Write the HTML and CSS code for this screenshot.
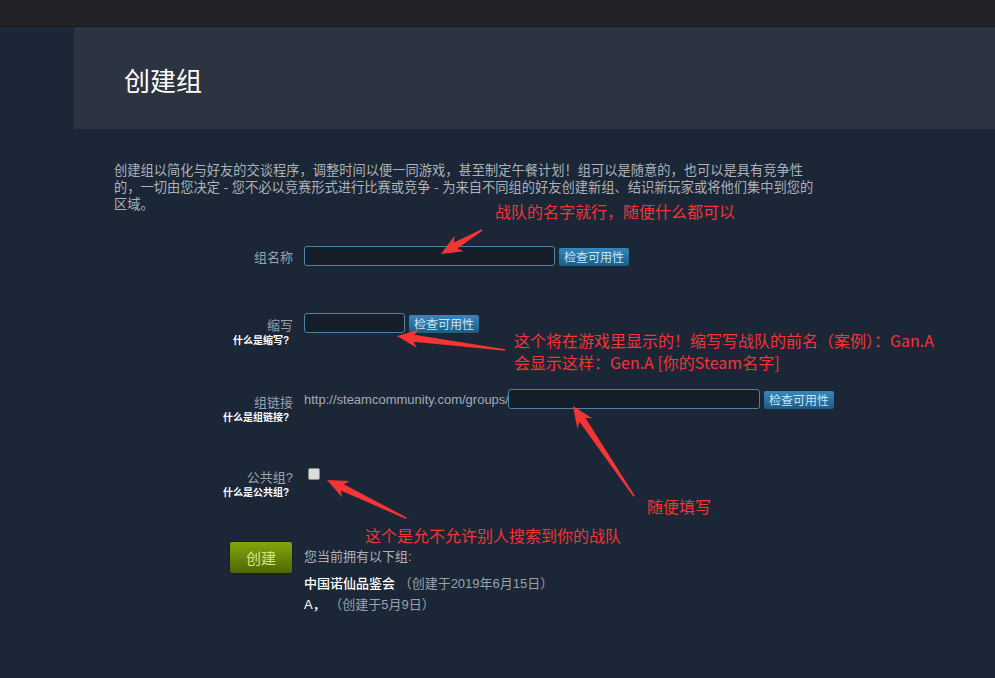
FILE: index.html
```html
<!DOCTYPE html>
<html lang="zh-CN">
<head>
<meta charset="utf-8">
<title>创建组</title>
<link rel="stylesheet" href="styles.css">
</head>
<body>
<div class="topbar"></div>
<div class="page">
  <div class="band"><h1 class="title">创建组</h1></div>
  <div class="content">
    <p class="intro">创建组以简化与好友的交谈程序，调整时间以便一同游戏，甚至制定午餐计划！组可以是随意的，也可以是具有竞争性<br>的，一切由您决定 - 您不必以竞赛形式进行比赛或竞争 - 为来自不同组的好友创建新组、结识新玩家或将他们集中到您的区域。</p>
    <div class="form">
      <div class="row row-name">
        <div class="label"><div class="lbl">组名称</div></div>
        <div class="field"><input class="txt w-name" type="text"><button class="check">检查可用性</button></div>
      </div>
      <div class="row row-abbr">
        <div class="label"><div class="lbl">缩写</div><div class="help">什么是缩写?</div></div>
        <div class="field"><input class="txt w-abbr" type="text"><button class="check">检查可用性</button></div>
      </div>
      <div class="row row-link">
        <div class="label"><div class="lbl">组链接</div><div class="help">什么是组链接?</div></div>
        <div class="field"><span class="url">http://steamcommunity.com/groups/</span><input class="txt w-link" type="text"><button class="check">检查可用性</button></div>
      </div>
      <div class="row row-public">
        <div class="label lbl-public"><div class="lbl">公共组?</div><div class="help">什么是公共组?</div></div>
        <div class="field field-top"><input class="chk" type="checkbox"></div>
      </div>
      <div class="row row-create">
        <div class="label"><button class="create">创建</button></div>
        <div class="groups">
          <div class="groups-head">您当前拥有以下组:</div>
          <div class="group-list">
            <div class="group"><span class="gname">中国诺仙品鉴会</span> <span class="date">（创建于2019年6月15日）</span></div>
            <div class="group"><span class="gname">A，</span> <span class="date">（创建于5月9日）</span></div>
          </div>
        </div>
      </div>
    </div>
  </div>
</div>

<div class="notes">
  <svg class="arrows" width="995" height="678" viewBox="0 0 995 678">
    <g fill="#f43535">
      <polygon transform="translate(441 254) rotate(-30.3)" points="0,0 21,-9 17,-3.5 47.5,-0.8 47.5,0.8 17,3.5 21,9"/>
      <polygon transform="translate(397 336) rotate(7.4)" points="0,0 21,-9 17,-3.5 109,-0.8 109,0.8 17,3.5 21,9"/>
      <polygon transform="translate(573 406) rotate(55.9)" points="0,0 21,-9 17,-3.5 109,-0.8 109,0.8 17,3.5 21,9"/>
      <polygon transform="translate(327 480) rotate(25.7)" points="0,0 21,-9 17,-3.5 88,-0.8 88,0.8 17,3.5 21,9"/>
    </g>
  </svg>
  <div class="note note-1">战队的名字就行，随便什么都可以</div>
  <div class="note note-2">这个将在游戏里显示的！缩写写战队的前名（案例）：Gan.A<br>会显示这样：Gen.A [你的Steam名字]</div>
  <div class="note note-3">随便填写</div>
  <div class="note note-4">这个是允不允许别人搜索到你的战队</div>
</div>
</body>
</html>
```

FILE: styles.css
```css
html, body {
  margin: 0;
  padding: 0;
}
body {
  position: relative;
  width: 995px;
  height: 678px;
  overflow: hidden;
  background: #1b2637;
  font-family: "Liberation Sans", "Noto Sans CJK SC", sans-serif;
  font-size: 13px;
  color: #acb2b8;
}
.topbar {
  height: 26px;
  background: #212329;
  border-bottom: 1px solid #16181c;
}
.page {
  margin-left: 74px;
}
.band {
  height: 102px;
  background: #2b3440;
  box-sizing: border-box;
  padding: 36px 0 0 50px;
}
.title {
  margin: 0;
  font-family: "Noto Sans CJK SC", sans-serif;
  font-weight: 400;
  font-size: 26px;
  line-height: 34px;
  color: #ffffff;
}
.content {
  padding-left: 40px;
}
.intro {
  margin: 33px 0 0;
  width: 712px;
  font-size: 13.25px;
  line-height: 17px;
  color: #acb2b8;
}
.form {
  margin-top: 33px;
}
.row {
  display: grid;
  grid-template-columns: 179px auto;
  column-gap: 11px;
}
.row-name { margin-bottom: 47px; }
.row-abbr { margin-bottom: 41px; }
.row-link { margin-bottom: 43px; }
.row-public { margin-bottom: 42px; }
.label {
  text-align: right;
  padding-top: 5px;
}
.row-name .label { padding-top: 4px; }
.row-link .label { padding-top: 6px; }
.lbl-public { padding-top: 2px; }
.lbl {
  font-size: 13px;
  line-height: 16px;
  color: #9aa2ab;
}
.help {
  font-size: 10px;
  line-height: 14px;
  font-weight: bold;
  color: #ffffff;
  padding-right: 4px;
}
.field {
  display: flex;
  align-items: center;
  height: 20px;
}
.field-top {
  align-items: flex-start;
}
.txt {
  box-sizing: border-box;
  height: 20px;
  margin: 0;
  padding: 0 4px;
  background: #161e2a;
  border: 1px solid #4a85a8;
  border-radius: 3px;
  color: #fff;
  outline: none;
}
.w-name { width: 251px; }
.w-abbr { width: 101px; }
.w-link { width: 252px; }
.url {
  font-size: 13px;
  color: #a3abb3;
  white-space: nowrap;
  width: 204px;
}
.check {
  margin: 1px 0 0 4px;
  box-sizing: border-box;
  width: 70px;
  height: 18px;
  padding: 0;
  border: none;
  border-radius: 2px;
  background: linear-gradient(to bottom, #3588bb 0%, #1d5b84 100%);
  color: #c7e6fa;
  font-family: "Noto Sans CJK SC", sans-serif;
  font-size: 12px;
  line-height: 18px;
}
.chk {
  appearance: none;
  -webkit-appearance: none;
  box-sizing: border-box;
  width: 12px;
  height: 12px;
  margin: 0 0 0 4px;
  background: #dcdcdc;
  border: 1px solid #8a8a8a;
  border-radius: 2px;
}
.row-create .label {
  padding-top: 0;
}
.create {
  box-sizing: border-box;
  width: 62px;
  height: 31px;
  margin-right: 1px;
  padding: 0;
  border: none;
  border-radius: 2px;
  background: linear-gradient(to bottom, #80a30c 5%, #536904 95%);
  box-shadow: 0 0 2px rgba(0,0,0,0.5);
  color: #d2e885;
  font-family: "Noto Sans CJK SC", sans-serif;
  font-size: 15px;
  line-height: 31px;
}
.groups {
  padding-top: 7px;
}
.groups-head {
  line-height: 16px;
  color: #acb2b8;
}
.group-list {
  margin-top: 8px;
}
.group {
  line-height: 21px;
  color: #ffffff;
}
.gname {
  font-weight: 500;
}
.date {
  color: #9aa2ab;
}
.notes {
  position: absolute;
  left: 0;
  top: 0;
  width: 995px;
  height: 678px;
  pointer-events: none;
}
.arrows {
  position: absolute;
  left: 0;
  top: 0;
}
.note {
  position: absolute;
  font-family: "Noto Sans CJK SC", sans-serif;
  font-size: 16px;
  line-height: 22px;
  color: #f43535;
  white-space: nowrap;
}
.note-1 { left: 495px; top: 200px; }
.note-2 { left: 514px; top: 329px; }
.note-3 { left: 647px; top: 495px; }
.note-4 { left: 365px; top: 524px; }
```
